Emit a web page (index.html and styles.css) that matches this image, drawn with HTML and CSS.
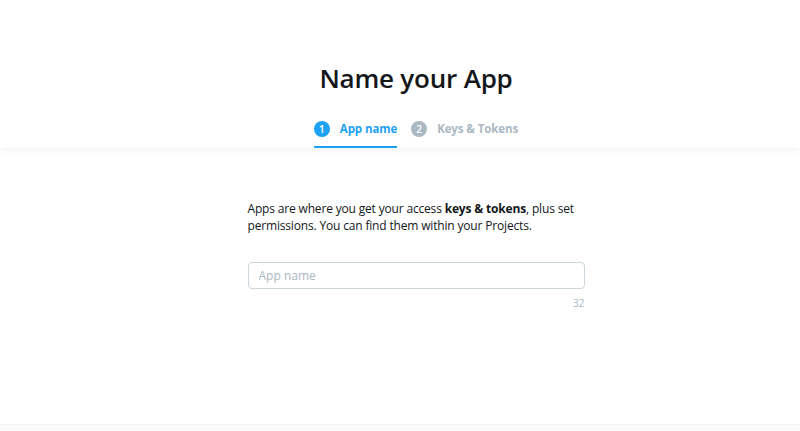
FILE: index.html
```html
<!DOCTYPE html>
<html lang="en">
<head>
    <meta charset="UTF-8">
    <meta name="viewport" content="width=device-width, initial-scale=1.0">
    <title>Name your App</title>
    <link rel="stylesheet" href="styles.css">
</head>
<body>
    <header class="header">
        <h1>Name your App</h1>
        <nav class="steps">
            <div class="step active"><span class="num">1</span>App name</div>
            <div class="step"><span class="num">2</span>Keys &amp; Tokens</div>
        </nav>
    </header>

    <main class="main">
        <div class="content">
            <p class="intro">Apps are where you get your access <b>keys &amp; tokens</b>, plus set permissions. You can find them within your Projects.</p>
            <input type="text" class="field" placeholder="App name">
            <div class="count">32</div>
        </div>
    </main>

    <footer class="footer"></footer>
</body>
</html>
```

FILE: styles.css
```css
* {
    box-sizing: border-box;
}
body {
    margin: 0;
    font-family: "Open Sans", Arial, sans-serif;
    background: #fff;
    color: #14171a;
}
.header {
    height: 148px;
    padding-left: 32px;
    background: #fff;
    box-shadow: 0 2px 6px rgba(0, 0, 0, 0.06);
    display: flex;
    flex-direction: column;
    align-items: center;
    position: relative;
    z-index: 1;
}
.header h1 {
    margin: 60px 0 0;
    font-size: 26px;
    font-weight: 600;
    line-height: 36px;
    letter-spacing: -0.2px;
    color: #14171a;
}
.steps {
    display: flex;
    gap: 14px;
    margin-top: 17px;
}
.step {
    display: flex;
    align-items: center;
    gap: 10px;
    height: 35px;
    padding-bottom: 2px;
    font-size: 11.5px;
    font-weight: 700;
    letter-spacing: -0.1px;
    color: #aab8c2;
    border-bottom: 2px solid transparent;
}
.step.active {
    color: #1da1f2;
    border-bottom-color: #1da1f2;
}
.num {
    width: 16px;
    height: 16px;
    border-radius: 50%;
    background: #aab8c2;
    color: #fff;
    font-size: 10px;
    font-weight: 600;
    letter-spacing: 0;
    display: flex;
    align-items: center;
    justify-content: center;
}
.step.active .num {
    background: #1da1f2;
}
.main {
    height: 276px;
    padding-left: 32px;
    display: flex;
    justify-content: center;
}
.content {
    width: 337px;
    padding-top: 52px;
}
.intro {
    margin: 0;
    font-size: 12px;
    line-height: 17px;
    letter-spacing: -0.17px;
    color: #14171a;
}
.intro b {
    font-weight: 700;
}
.field {
    display: block;
    width: 100%;
    height: 27px;
    margin-top: 28px;
    padding: 0 10px;
    border: 1px solid #ccd6dd;
    border-radius: 4px;
    font-family: inherit;
    font-size: 12px;
    color: #14171a;
}
.field::placeholder {
    color: #aab8c2;
}
.count {
    margin-top: 7px;
    text-align: right;
    font-size: 10px;
    color: #aab8c2;
}
.footer {
    height: 7px;
    background: #fafafa;
    border-top: 1px solid #f2f2f2;
}
```
